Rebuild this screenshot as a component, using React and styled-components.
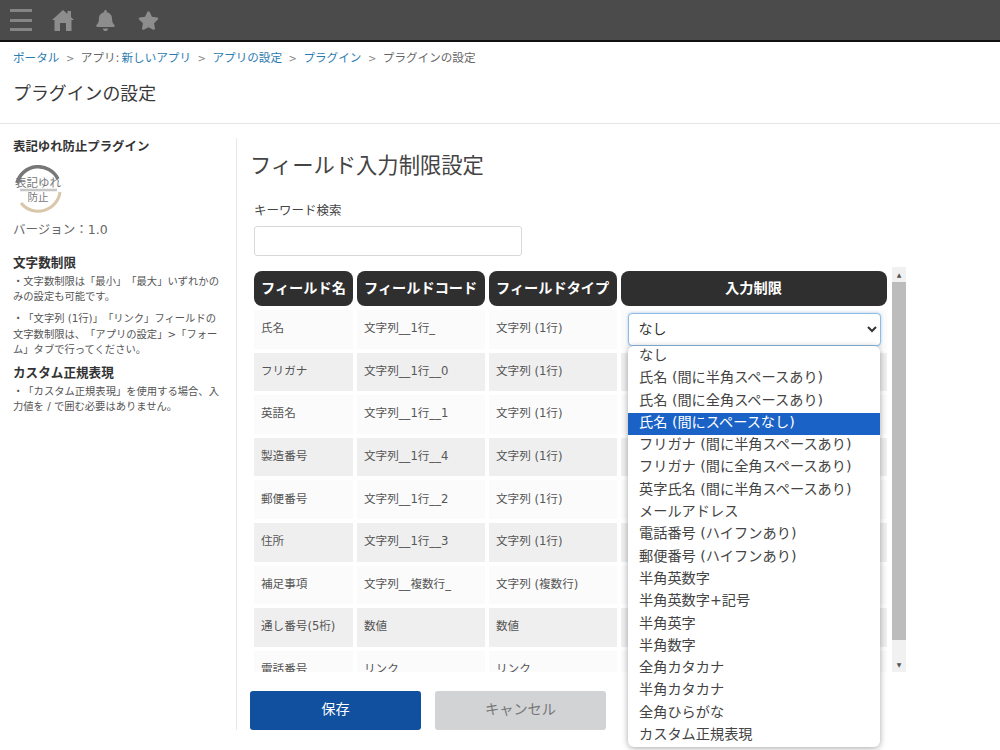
import React from 'react';
import styled, { createGlobalStyle } from 'styled-components';
import { FaBell, FaStar } from 'react-icons/fa';

const GlobalStyle = createGlobalStyle`
  html, body {
    margin: 0;
    padding: 0;
    height: 750px;
    overflow: hidden;
    background: #fff;
    font-family: "DejaVu Sans", "Noto Sans CJK JP", sans-serif;
    text-spacing-trim: space-all;
    color: #333;
  }
`;

const Header = styled.header`
  height: 40px;
  background: #4b4b4b;
  border-bottom: 2px solid #111;
  display: flex;
  align-items: center;
  padding-left: 10px;
  gap: 20.4px;
`;

const Burger = styled.div`
  width: 22px;
  height: 22px;
  display: flex;
  flex-direction: column;
  justify-content: space-between;
  span {
    display: block;
    height: 3px;
    background: #858585;
  }
`;

const IconSlot = styled.div`
  width: 22px;
  height: 22px;
  display: flex;
  align-items: center;
  justify-content: center;
  font-size: 21px;
  color: #8d8d8d;
`;

const Crumbs = styled.nav`
  display: flex;
  align-items: center;
  box-sizing: border-box;
  height: 28px;
  padding: 2px 0 0 13px;
  font-size: 11.6px;
  color: #666;
`;

const CrumbLink = styled.span`
  color: #2b7bb0;
`;

const CrumbPlain = styled.span`
  margin-right: ${(props) => (props.$tight ? '2px' : '0')};
`;

const CrumbSep = styled.span`
  color: #888;
  font-size: 10px;
  margin: 2px 6.5px 0 6.5px;
`;

const PageTitle = styled.h1`
  margin: 0 0 0 13px;
  height: 53px;
  font-size: 17.9px;
  font-weight: 400;
  line-height: 48px;
  color: #3a3a3a;
`;

const Divider = styled.div`
  height: 1px;
  background: #e6e6e6;
`;

const Body = styled.div`
  display: flex;
  margin-top: 14px;
  height: 592px;
`;

const Sidebar = styled.aside`
  width: 210px;
  padding: 1px 13px 0;
  border-right: 1px solid #e8e8e8;
  flex-shrink: 0;
`;

const PluginName = styled.div`
  font-size: 12.4px;
  font-weight: 700;
  line-height: 16px;
  color: #333;
`;

const Logo = styled.svg`
  display: block;
  width: 48px;
  height: 48px;
  margin: 10px 0 8px 1px;
`;

const Version = styled.div`
  font-size: 12.5px;
  line-height: 18px;
  color: #666;
  margin-bottom: 15px;
`;

const SideHeading = styled.div`
  font-size: 12.6px;
  font-weight: 700;
  line-height: 18px;
  color: #333;
  margin: ${(props) => (props.$later ? '1px' : '0')} 0 2px;
`;

const SideText = styled.p`
  margin: 0 0 6.5px;
  font-size: 10.3px;
  line-height: 15.4px;
  color: #555;
`;

const Main = styled.main`
  flex: 1;
  padding-left: 13px;
`;

const FormTitle = styled.h2`
  margin: 12px 0 0;
  font-size: 21.3px;
  font-weight: 400;
  line-height: 32px;
  color: #444;
`;

const FieldLabel = styled.label`
  display: block;
  margin: 20px 0 0 4px;
  font-size: 12.5px;
  line-height: 18px;
  color: #444;
`;

const SearchInput = styled.input`
  display: block;
  box-sizing: border-box;
  width: 268px;
  height: 30px;
  margin: 6px 0 0 4px;
  border: 1px solid #d8d8d8;
  border-radius: 3px;
  background: #fff;
`;

const TableArea = styled.div`
  position: relative;
  display: flex;
  width: 656px;
  margin-top: 11px;
`;

const TableScroll = styled.div`
  width: 642px;
  height: 405px;
  overflow: hidden;
`;

const Grid = styled.div`
  display: grid;
  grid-template-columns: 99px 128px 127.5px 266px;
  grid-template-rows: 35px;
  grid-auto-rows: 38.6px;
  gap: 4px;
  padding: 4px;
`;

const HeadCell = styled.div`
  display: flex;
  align-items: center;
  justify-content: ${(props) => (props.$center ? 'center' : 'flex-start')};
  padding: 0 0 3px ${(props) => (props.$center ? '0' : '7px')};
  background: #2f2f2f;
  color: #fff;
  border-radius: 8px;
  font-size: 14.2px;
  font-weight: 700;
  white-space: nowrap;
`;

const Cell = styled.div`
  display: flex;
  align-items: center;
  padding: 0 0 4px 7px;
  background: ${(props) => (props.$odd ? '#efefef' : '#fbfbfb')};
  font-size: 11.6px;
  color: #555;
  white-space: nowrap;
`;

const RestrictCell = styled(Cell)`
  padding: 0 6px 0 7px;
`;

const RuleSelect = styled.select`
  box-sizing: border-box;
  width: 253px;
  height: 33px;
  padding: 0 6px;
  background-color: #fff;
  border: 1px solid #8fbce6;
  border-radius: 4px;
  box-shadow: 0 0 3px rgba(90, 150, 220, 0.5);
  font-family: inherit;
  font-size: 14px;
  color: #333;
  outline: none;
`;

const ScrollBar = styled.div`
  width: 14px;
  height: 405px;
  display: flex;
  flex-direction: column;
  background: #f1f1f1;
`;

const ScrollArrow = styled.div`
  height: 15px;
  display: flex;
  align-items: center;
  justify-content: center;
  color: #555;
  font-size: 6px;
`;

const ScrollThumb = styled.div`
  height: 358px;
  background: #bcbcbc;
`;

const ScrollRest = styled.div`
  flex: 1;
`;

const Dropdown = styled.ul`
  position: absolute;
  top: 79px;
  left: 378px;
  box-sizing: border-box;
  width: 252px;
  height: 401px;
  margin: 0;
  padding: 0;
  list-style: none;
  overflow: hidden;
  background: #fff;
  border-radius: 6px;
  box-shadow: 0 1px 6px rgba(0, 0, 0, 0.35);
`;

const Option = styled.li`
  height: 22.3px;
  line-height: 19px;
  padding-left: 11px;
  font-size: 14.2px;
  white-space: nowrap;
  color: ${(props) => (props.$active ? '#fff' : '#444')};
  background: ${(props) => (props.$active ? '#1a62c6' : 'transparent')};
`;

const Actions = styled.div`
  display: flex;
  gap: 14px;
  margin-top: 19px;
`;

const ActionButton = styled.button`
  width: 171px;
  height: 38.5px;
  padding: 0 0 5px;
  border: none;
  border-radius: 3px;
  font-family: inherit;
  font-size: 14.2px;
  cursor: pointer;
  background: ${(props) => (props.$primary ? '#10509e' : '#d1d3d5')};
  color: ${(props) => (props.$primary ? '#fff' : '#777')};
`;

const rows = [
  ['氏名', '文字列__1行_', '文字列 (1行)'],
  ['フリガナ', '文字列__1行__0', '文字列 (1行)'],
  ['英語名', '文字列__1行__1', '文字列 (1行)'],
  ['製造番号', '文字列__1行__4', '文字列 (1行)'],
  ['郵便番号', '文字列__1行__2', '文字列 (1行)'],
  ['住所', '文字列__1行__3', '文字列 (1行)'],
  ['補足事項', '文字列__複数行_', '文字列 (複数行)'],
  ['通し番号(5桁)', '数値', '数値'],
  ['電話番号', 'リンク', 'リンク'],
];

const options = [
  'なし',
  '氏名 (間に半角スペースあり)',
  '氏名 (間に全角スペースあり)',
  '氏名 (間にスペースなし)',
  'フリガナ (間に半角スペースあり)',
  'フリガナ (間に全角スペースあり)',
  '英字氏名 (間に半角スペースあり)',
  'メールアドレス',
  '電話番号 (ハイフンあり)',
  '郵便番号 (ハイフンあり)',
  '半角英数字',
  '半角英数字+記号',
  '半角英字',
  '半角数字',
  '全角カタカナ',
  '半角カタカナ',
  '全角ひらがな',
  'カスタム正規表現',
];

const HomeIcon = () => (
  <svg width="22" height="22" viewBox="0 0 22 22" fill="currentColor">
    <path d="M11 1 L15.5 5 L15.5 2 L19 2 L19 8 L22 11 L19.5 11 L19.5 22 L14 22 L14 14 L8 14 L8 22 L2.5 22 L2.5 11 L0 11 Z" />
  </svg>
);

const App = () => {
  return (
    <>
      <GlobalStyle />
      <Header>
        <Burger><span /><span /><span /></Burger>
        <IconSlot><HomeIcon /></IconSlot>
        <IconSlot><FaBell /></IconSlot>
        <IconSlot><FaStar /></IconSlot>
      </Header>
      <Crumbs>
        <CrumbLink>ポータル</CrumbLink>
        <CrumbSep>&gt;</CrumbSep>
        <CrumbPlain $tight>アプリ:</CrumbPlain>
        <CrumbLink>新しいアプリ</CrumbLink>
        <CrumbSep>&gt;</CrumbSep>
        <CrumbLink>アプリの設定</CrumbLink>
        <CrumbSep>&gt;</CrumbSep>
        <CrumbLink>プラグイン</CrumbLink>
        <CrumbSep>&gt;</CrumbSep>
        <CrumbPlain>プラグインの設定</CrumbPlain>
      </Crumbs>
      <PageTitle>プラグインの設定</PageTitle>
      <Divider />
      <Body>
        <Sidebar>
          <PluginName>表記ゆれ防止プラグイン</PluginName>
          <Logo viewBox="0 0 48 48">
            <path d="M3 18 A22 22 0 0 1 44 14" fill="none" stroke="#777" strokeWidth="3.5" />
            <path d="M46 27 A22 22 0 0 1 7 38" fill="none" stroke="#d9c7ab" strokeWidth="3" />
            <path d="M6 25 L43 25" stroke="#999" strokeWidth="2.5" opacity="0.55" />
            <text x="24" y="22" fontSize="11.5" textAnchor="middle" fill="#777">表記ゆれ</text>
            <text x="24" y="36" fontSize="10.5" textAnchor="middle" fill="#777">防止</text>
          </Logo>
          <Version>バージョン：1.0</Version>
          <SideHeading>文字数制限</SideHeading>
          <SideText>・文字数制限は「最小」「最大」いずれかのみの設定も可能です。</SideText>
          <SideText>・「文字列 (1行)」「リンク」フィールドの文字数制限は、「アプリの設定」&gt;「フォーム」タブで行ってください。</SideText>
          <SideHeading $later>カスタム正規表現</SideHeading>
          <SideText>・「カスタム正規表現」を使用する場合、入力値を / で囲む必要はありません。</SideText>
        </Sidebar>
        <Main>
          <FormTitle>フィールド入力制限設定</FormTitle>
          <FieldLabel>キーワード検索</FieldLabel>
          <SearchInput type="text" />
          <TableArea>
            <TableScroll>
              <Grid>
                <HeadCell>フィールド名</HeadCell>
                <HeadCell>フィールドコード</HeadCell>
                <HeadCell>フィールドタイプ</HeadCell>
                <HeadCell $center>入力制限</HeadCell>
                {rows.map((row, i) => (
                  <React.Fragment key={row[0]}>
                    <Cell $odd={i % 2 === 1}>{row[0]}</Cell>
                    <Cell $odd={i % 2 === 1}>{row[1]}</Cell>
                    <Cell $odd={i % 2 === 1}>{row[2]}</Cell>
                    <RestrictCell $odd={i % 2 === 1}>
                      {i === 0 && (
                        <RuleSelect defaultValue="なし">
                          <option>なし</option>
                        </RuleSelect>
                      )}
                    </RestrictCell>
                  </React.Fragment>
                ))}
              </Grid>
            </TableScroll>
            <ScrollBar>
              <ScrollArrow>▲</ScrollArrow>
              <ScrollThumb />
              <ScrollRest />
              <ScrollArrow>▼</ScrollArrow>
            </ScrollBar>
            <Dropdown>
              {options.map((option, i) => (
                <Option key={option} $active={i === 3}>{option}</Option>
              ))}
            </Dropdown>
          </TableArea>
          <Actions>
            <ActionButton $primary>保存</ActionButton>
            <ActionButton>キャンセル</ActionButton>
          </Actions>
        </Main>
      </Body>
    </>
  );
};

export default App;
